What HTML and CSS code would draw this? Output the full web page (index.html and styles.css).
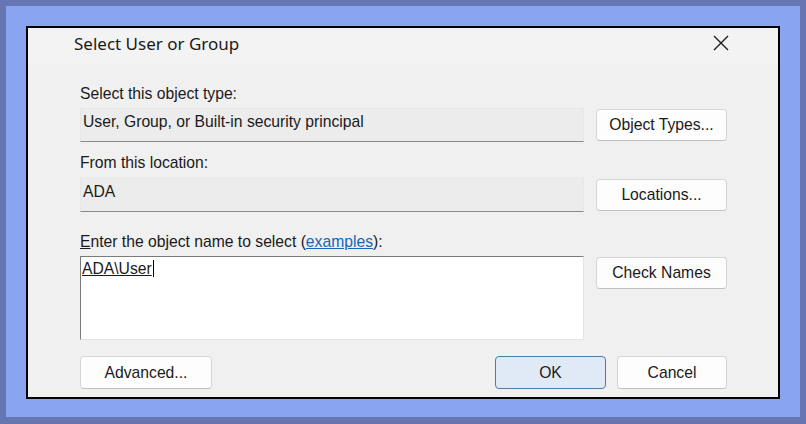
FILE: index.html
```html
<!DOCTYPE html>
<html>

<head>
    <title>Select User or Group</title>
    <link rel="stylesheet" href="styles.css">
</head>

<body>
    <div class="frame">
        <div class="backdrop">
            <div class="dialog">
                <div class="titlebar">
                    <span class="title">Select User or Group</span>
                    <svg class="close" width="16" height="16" viewBox="0 0 16 16">
                        <path d="M1 1 L15 15 M15 1 L1 15" stroke="#1c1c1c" stroke-width="1.4" fill="none" />
                    </svg>
                </div>
                <div class="content">
                    <div class="label first">Select this object type:</div>
                    <div class="row">
                        <div class="field">User, Group, or Built-in security principal</div>
                        <button class="btn">Object Types...</button>
                    </div>

                    <div class="label second">From this location:</div>
                    <div class="row">
                        <div class="field">ADA</div>
                        <button class="btn">Locations...</button>
                    </div>

                    <div class="label third"><u>E</u>nter the object name to select (<a href="#" class="link">examples</a>):</div>
                    <div class="row">
                        <div class="names"><span class="resolved">ADA\User</span><span class="caret"></span></div>
                        <button class="btn">Check Names</button>
                    </div>

                    <div class="actions">
                        <button class="btn wide">Advanced...</button>
                        <div class="right-actions">
                            <button class="btn small primary">OK</button>
                            <button class="btn small">Cancel</button>
                        </div>
                    </div>
                </div>
            </div>
        </div>
    </div>
</body>

</html>
```

FILE: styles.css
```css
html, body {
    margin: 0;
    padding: 0;
}

body {
    width: 806px;
    height: 424px;
    overflow: hidden;
    font-family: "Liberation Sans", Arial, sans-serif;
    color: #1a1a1a;
}

.frame {
    box-sizing: border-box;
    height: 424px;
    padding: 6px 6px 7px 6px;
    background-color: #6676b2;
}

.backdrop {
    box-sizing: border-box;
    height: 411px;
    padding: 20px 20px 18px 20px;
    background-color: #8aa5ef;
}

.dialog {
    box-sizing: border-box;
    height: 373px;
    border: 2px solid #000;
    background-color: #f0f0f0;
}

.titlebar {
    height: 36px;
    display: flex;
    align-items: center;
    justify-content: space-between;
    padding: 0 49px 0 46px;
    background-color: #f3f3f3;
}

.title {
    font-family: "Noto Sans", sans-serif;
    font-size: 17px;
    color: #1a1a1a;
    margin-top: -5px;
}

.close {
    margin-top: -7px;
}

.content {
    padding: 0 0 0 52px;
    font-size: 15.7px;
    line-height: 17px;
}

.label {
    height: 17px;
    margin-bottom: 6px;
}

.label.first {
    margin-top: 21px;
}

.label.second {
    margin-top: 12px;
    margin-bottom: 7px;
}

.label.third {
    margin-top: 21px;
}

.link {
    color: #1565b8;
    text-decoration: underline;
}

.row {
    display: flex;
    align-items: flex-start;
    gap: 12px;
}

.field {
    box-sizing: border-box;
    width: 504px;
    height: 34px;
    padding: 4px 3px 0 2px;
    background-color: #ececec;
    border: 1px solid #e6e6e6;
    border-bottom: 1px solid #8a8a8a;
}

.names {
    box-sizing: border-box;
    width: 504px;
    height: 84px;
    padding: 3px 2px 0 1px;
    background-color: #fff;
    border: 1px solid #e4e4e4;
    border-top: 1px solid #7a7a7a;
    border-left: 1px solid #7a7a7a;
}

.resolved {
    text-decoration: underline;
}

.caret {
    display: inline-block;
    width: 1px;
    height: 17px;
    margin-left: 1px;
    vertical-align: -3px;
    background-color: #000;
}

.btn {
    box-sizing: border-box;
    width: 131px;
    height: 32px;
    margin-top: 1px;
    padding: 0;
    font-family: "Liberation Sans", Arial, sans-serif;
    font-size: 15.7px;
    color: #1a1a1a;
    background-color: #fdfdfd;
    border: 1px solid #d6d6d6;
    border-bottom-color: #c2c2c2;
    border-radius: 4px;
}

.actions {
    display: flex;
    justify-content: space-between;
    width: 647px;
    margin-top: 16px;
}

.actions .btn {
    margin-top: 0;
    height: 33px;
}

.btn.wide {
    width: 132px;
}

.right-actions {
    display: flex;
    gap: 11px;
}

.btn.small {
    width: 110px;
}

.btn.primary {
    width: 111px;
    background-color: #dfeaf6;
    border: 1px solid #4d7fa6;
}
```
